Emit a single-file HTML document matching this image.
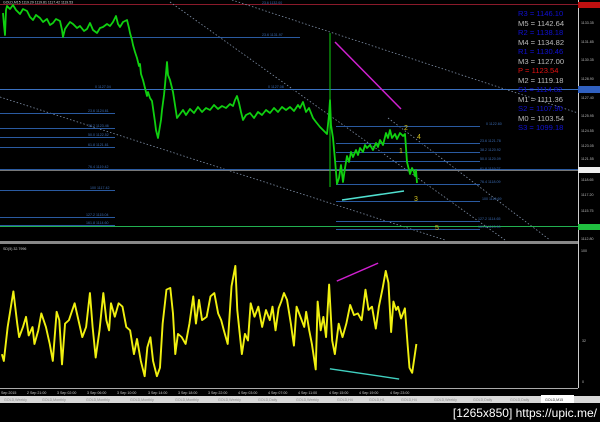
<!DOCTYPE html>
<html><head><meta charset="utf-8"><style>
html,body{margin:0;padding:0;background:#000;width:600px;height:422px;overflow:hidden}
svg{display:block}
text{font-family:"Liberation Sans",sans-serif}
</style></head><body>
<svg width="600" height="422" viewBox="0 0 600 422" xmlns="http://www.w3.org/2000/svg">
<rect width="600" height="422" fill="#000"/>
<line x1="0" y1="4.5" x2="578" y2="4.5" stroke="#8a1a2a" stroke-width="1"/>
<text x="3" y="3.5" font-size="3.5" fill="#ddd">GOLD,M15 1119.29 1119.81 1117.42 1119.53</text>
<text x="262" y="4" font-size="3.5" fill="#3a6ab0">23.6 1132.00</text>
<g stroke="#8090a8" stroke-width="0.8" stroke-dasharray="1.5,2" fill="none">
<line x1="232" y1="0" x2="578" y2="113"/>
<line x1="0" y1="97" x2="445" y2="240"/>
<line x1="170" y1="2" x2="505" y2="240"/>
<line x1="388" y1="118" x2="550" y2="240"/>
</g>
<g stroke="#2a5aa0" stroke-width="1">
<line x1="0" y1="37.5" x2="300" y2="37.5"/>
<line x1="0" y1="89.5" x2="578" y2="89.5" stroke="#3a70c0"/>
<line x1="0" y1="113.5" x2="115" y2="113.5"/>
<line x1="0" y1="128.5" x2="115" y2="128.5"/>
<line x1="0" y1="137.5" x2="115" y2="137.5"/>
<line x1="0" y1="147.5" x2="115" y2="147.5"/>
<line x1="0" y1="190.5" x2="115" y2="190.5"/>
<line x1="0" y1="217.5" x2="115" y2="217.5"/>
<line x1="0" y1="225.5" x2="115" y2="225.5"/>
<line x1="336" y1="126.5" x2="480" y2="126.5"/>
<line x1="336" y1="143.5" x2="480" y2="143.5"/>
<line x1="336" y1="152.5" x2="480" y2="152.5"/>
<line x1="336" y1="161.5" x2="480" y2="161.5"/>
<line x1="336" y1="184.5" x2="480" y2="184.5"/>
<line x1="336" y1="201.5" x2="480" y2="201.5"/>
<line x1="336" y1="221.5" x2="480" y2="221.5"/>
<line x1="336" y1="229.5" x2="480" y2="229.5"/>
</g>
<line x1="0" y1="169.5" x2="578" y2="169.5" stroke="#2a5aa0" stroke-width="1"/>
<line x1="0" y1="170.5" x2="578" y2="170.5" stroke="#777" stroke-width="1"/>
<line x1="0" y1="226.5" x2="578" y2="226.5" stroke="#22b050" stroke-width="1"/>
<g font-size="3.6" fill="#3a6ab0">
<text x="262" y="36">23.6 1131.97</text>
<text x="95" y="88">0 1127.04</text>
<text x="268" y="88">0 1127.08</text>
<text x="88" y="112">23.6 1124.61</text>
<text x="88" y="127">38.2 1123.46</text>
<text x="88" y="136">50.0 1122.52</text>
<text x="88" y="146">61.8 1121.61</text>
<text x="88" y="168">76.4 1119.42</text>
<text x="90" y="189">100 1117.42</text>
<text x="86" y="216">127.2 1115.04</text>
<text x="86" y="224">161.8 1114.60</text>
<text x="486" y="125">0 1122.60</text>
<text x="480" y="142">23.6 1121.78</text>
<text x="480" y="151">38.2 1120.92</text>
<text x="480" y="160">50.0 1120.09</text>
<text x="480" y="170">61.8 1119.27</text>
<text x="480" y="183">76.4 1118.09</text>
<text x="482" y="200">100 1116.69</text>
<text x="478" y="220">127.2 1114.65</text>
<text x="478" y="228">161.8 1113.90</text>
</g>
<g fill="none" stroke="#10d010" stroke-linejoin="round">
<polyline stroke-width="1.8" points="3,13 4,25 5,35 6,10 7,6 10,9 13,5 16,10 20,14 23,9 27,11 30,17 33,20 36,15 40,18 43,22 47,19 50,25 53,23 56,19 60,21 62,30 63,37 65,29 67,26 70,22 73,24 77,28 80,26 84,31 87,29 90,23 93,30 97,33 100,28 103,27 107,24 110,26 113,22 116,16 118,24 120,27 123,22 127,20 129,28 130,33 132,40 133,45 135,52 137,58 139,66 140,64 141,74 143,80 145,88 147,96 148,92 150,98 152,101 154,115 155,122 156,130 158,138 159,132 161,120 162,110 164,95 165,85 167,62 168,75 170,80 172,88 173,92 175,105 177,118 180,114 183,110 186,115 190,109 194,113 198,107 202,112 206,108 210,110 214,105 218,109 222,106 226,108 230,104 233,106 235,100 237,96 239,103 241,112 243,120 246,115 250,113 254,118 258,112 262,115 266,110 270,113 274,108 278,112 282,107 286,110 290,107 294,111 298,105 300,108 303,102 306,112 309,108 313,118 316,122 320,127 323,130 327,134 329,115 330,100 331,125 333,138 335,160 337,184 339,178 341,165 343,182 345,168 347,156 349,162 351,152 353,157 356,150 358,155 360,148 363,152 365,145 367,148 370,145 373,150 376,143 378,147 380,140 383,145 386,133 388,138 390,130 392,138 395,134 397,139 400,133 403,136 405,134 406,148 407,162 409,170 410,174 412,168 414,172 415,176 416,170 417,183"/>
<line x1="330" y1="33" x2="330" y2="187" stroke-width="1"/>
</g>
<line x1="335" y1="42" x2="401" y2="109" stroke="#d020d0" stroke-width="1.5"/>
<line x1="342" y1="200" x2="404" y2="191" stroke="#50e0d0" stroke-width="1.5"/>
<g font-size="7" fill="#d0c020">
<text x="404" y="130">2</text><text x="417" y="139">4</text><text x="399" y="153">1</text><text x="414" y="201">3</text><text x="435" y="230">5</text>
</g>
<g font-size="7.6">
<text x="518" y="16" fill="#1010d0">R3 = 1146.10</text>
<text x="518" y="26" fill="#bbb">M5 = 1142.64</text>
<text x="518" y="35" fill="#1010d0">R2 = 1138.18</text>
<text x="518" y="45" fill="#bbb">M4 = 1134.82</text>
<text x="518" y="54" fill="#1010d0">R1 = 1130.46</text>
<text x="518" y="64" fill="#bbb">M3 = 1127.00</text>
<text x="518" y="73" fill="#e01010">P  = 1123.54</text>
<text x="518" y="83" fill="#bbb">M2 = 1119.18</text>
<text x="518" y="92" fill="#1010d0">S1 = 1114.82</text>
<text x="518" y="102" fill="#bbb">M1 = 1111.36</text>
<text x="518" y="111" fill="#1010d0">S2 = 1107.90</text>
<text x="518" y="121" fill="#bbb">M0 = 1103.54</text>
<text x="518" y="130" fill="#1010d0">S3 = 1099.18</text>
</g>
<line x1="578.5" y1="0" x2="578.5" y2="388" stroke="#ccc" stroke-width="1"/>
<g font-size="3.6" fill="#bbb">
<text x="581" y="24">1133.35</text><text x="581" y="43">1131.85</text><text x="581" y="61">1130.35</text>
<text x="581" y="80">1128.90</text><text x="581" y="99">1127.40</text><text x="581" y="117">1125.95</text>
<text x="581" y="132">1124.55</text><text x="581" y="147">1123.05</text><text x="581" y="160">1121.55</text>
<text x="581" y="181">1118.65</text><text x="581" y="196">1117.20</text>
<text x="581" y="212">1115.75</text><text x="581" y="240">1112.80</text>
<text x="581" y="252">100</text><text x="582" y="342">32</text><text x="582" y="383">0</text>
</g>
<rect x="578" y="2" width="22" height="6" fill="#c01010"/>
<rect x="578" y="86" width="22" height="7" fill="#3060c0"/>
<rect x="578" y="167" width="22" height="6" fill="#eee"/>
<rect x="578" y="224" width="22" height="6" fill="#20c040"/>
<rect x="0" y="241" width="578" height="3" fill="#888"/>
<text x="3" y="250" font-size="3.6" fill="#ccc">SD(5) 32.7996</text>
<g transform="translate(0,242) scale(0.3827,0.34)">
<polyline fill="none" stroke="#f0f010" stroke-width="5" stroke-linejoin="round" points="5,330 10,350 20,250 35,145 45,240 50,280 60,250 68,220 75,275 85,250 90,300 100,260 108,210 120,250 130,300 138,350 148,205 155,230 162,360 170,240 180,230 195,180 205,230 215,280 225,250 235,150 242,250 250,340 260,260 270,150 278,230 285,260 290,180 300,220 310,180 320,190 330,250 340,260 350,330 358,285 368,350 378,395 385,310 393,280 400,350 410,395 418,370 425,240 435,140 445,135 452,210 458,330 465,270 475,280 485,300 495,240 505,160 512,240 520,170 528,230 540,220 550,160 560,150 570,210 578,230 585,260 595,300 605,130 615,70 620,200 632,330 640,270 648,290 655,180 665,220 675,190 685,250 695,200 705,230 712,190 720,260 728,195 735,175 742,150 750,170 760,240 768,305 775,190 785,220 795,250 800,205 808,260 815,300 825,375 830,175 838,260 845,220 852,280 860,125 868,290 875,330 885,240 895,280 905,240 915,185 925,215 935,210 945,230 955,140 963,200 972,190 982,255 990,190 1000,135 1008,85 1015,120 1022,265 1028,175 1035,200 1040,190 1048,225 1058,195 1065,300 1070,370 1077,385 1088,300"/>
<line x1="880" y1="115" x2="988" y2="62" stroke="#d020d0" stroke-width="4"/>
<line x1="862" y1="373" x2="1043" y2="403" stroke="#40d0c0" stroke-width="4"/>
</g>
<line x1="0" y1="388.5" x2="578" y2="388.5" stroke="#aaa" stroke-width="1"/>
<g font-size="3.6" fill="#ccc">
<text x="1" y="394">Sep 2015</text><text x="27" y="394">2 Sep 21:00</text><text x="57" y="394">3 Sep 02:00</text>
<text x="87" y="394">3 Sep 06:00</text><text x="117" y="394">3 Sep 10:00</text><text x="148" y="394">3 Sep 14:00</text>
<text x="178" y="394">3 Sep 18:00</text><text x="208" y="394">3 Sep 22:00</text><text x="238" y="394">4 Sep 03:00</text>
<text x="268" y="394">4 Sep 07:00</text><text x="298" y="394">4 Sep 11:00</text><text x="329" y="394">4 Sep 15:00</text>
<text x="359" y="394">4 Sep 19:00</text><text x="390" y="394">4 Sep 23:00</text>
</g>
<rect x="0" y="396" width="600" height="7" fill="#d8d8d8"/>
<rect x="541" y="395" width="33" height="8" fill="#fff"/>
<g font-size="3.6" fill="#888">
<text x="4" y="401">GOLD,Weekly</text><text x="42" y="401">GOLD,Monthly</text><text x="86" y="401">GOLD,Monthly</text>
<text x="130" y="401">GOLD,Monthly</text><text x="175" y="401">GOLD,Monthly</text><text x="218" y="401">GOLD,Weekly</text>
<text x="258" y="401">GOLD,Daily</text><text x="296" y="401">GOLD,Weekly</text><text x="337" y="401">GOLD,H4</text>
<text x="369" y="401">GOLD,H1</text><text x="401" y="401">GOLD,H4</text><text x="434" y="401">GOLD,Weekly</text>
<text x="473" y="401">GOLD,Daily</text><text x="510" y="401">GOLD,Daily</text><text x="545" y="401" fill="#333">GOLD,M15</text>
</g>
<text x="597" y="417" font-size="12" fill="#fff" text-anchor="end">[1265x850] https://upic.me/</text>
</svg>
</body></html>
